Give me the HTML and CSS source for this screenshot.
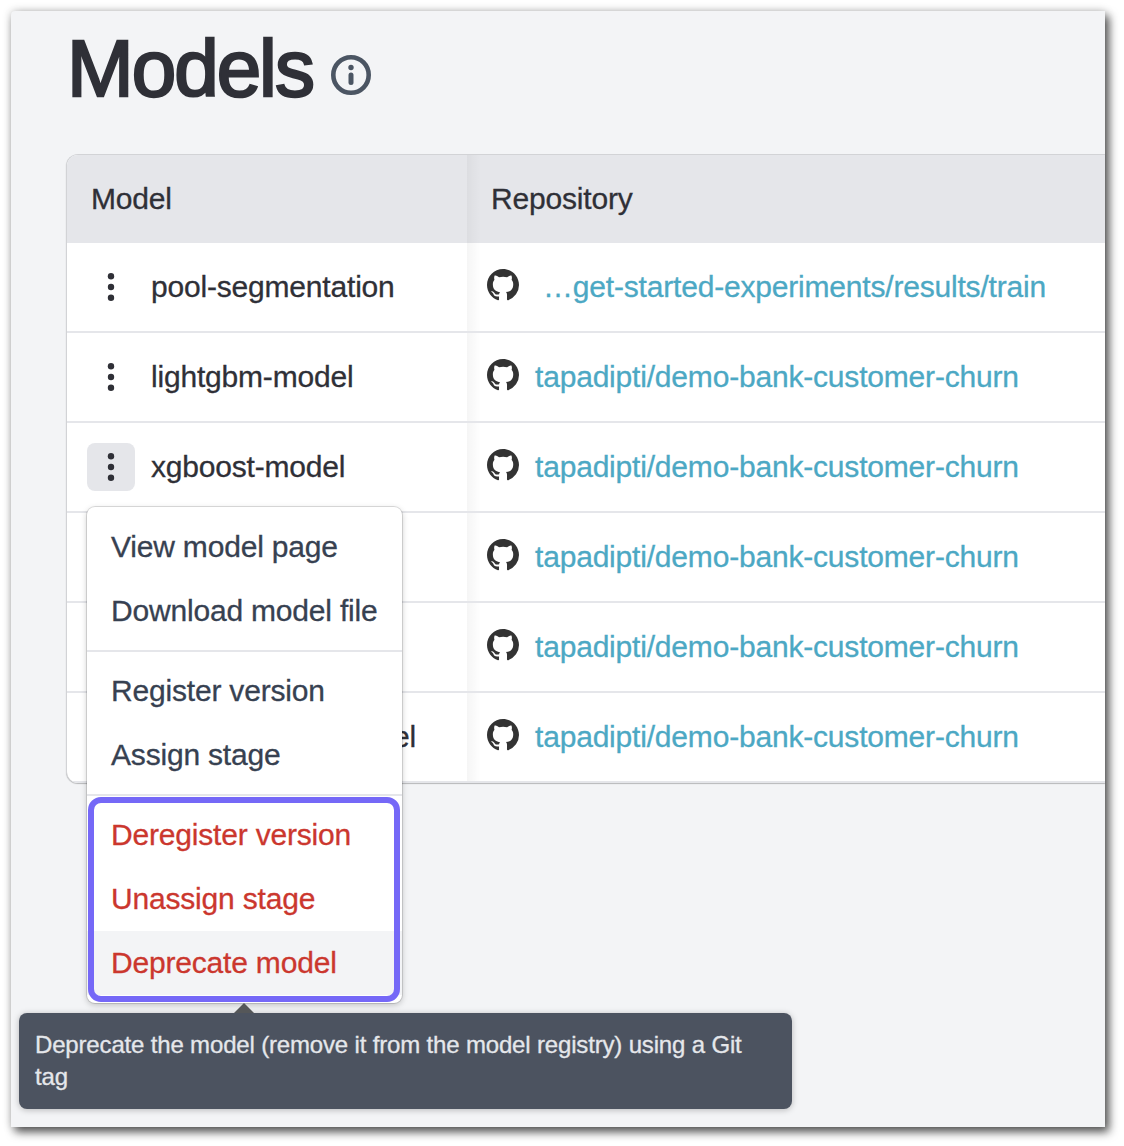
FILE: index.html
```html
<!DOCTYPE html>
<html lang="en">
<head>
<meta charset="utf-8">
<title>Models</title>
<link rel="stylesheet" href="styles.css">
</head>
<body>
<svg width="0" height="0" class="defs" aria-hidden="true">
  <symbol id="github" viewBox="0 0 16 16"><path d="M8 0C3.58 0 0 3.58 0 8c0 3.54 2.29 6.53 5.47 7.59.4.07.55-.17.55-.38 0-.19-.01-.82-.01-1.49-2.01.37-2.53-.49-2.69-.94-.09-.23-.48-.94-.82-1.13-.28-.15-.68-.52-.01-.53.63-.01 1.08.58 1.23.82.72 1.21 1.87.87 2.33.66.07-.52.28-.87.51-1.07-1.78-.2-3.64-.89-3.64-3.95 0-.87.31-1.59.82-2.15-.08-.2-.36-1.02.08-2.12 0 0 .67-.21 2.2.82.64-.18 1.32-.27 2-.27s1.36.09 2 .27c1.53-1.04 2.2-.82 2.2-.82.44 1.1.16 1.92.08 2.12.51.56.82 1.27.82 2.15 0 3.07-1.87 3.75-3.65 3.95.29.25.54.73.54 1.48 0 1.07-.01 1.93-.01 2.2 0 .21.15.46.55.38A8.01 8.01 0 0 0 16 8c0-4.42-3.58-8-8-8z"/></symbol>
  <symbol id="kebab" viewBox="0 0 48 48"><circle cx="24" cy="13.2" r="3.2"/><circle cx="24" cy="24" r="3.2"/><circle cx="24" cy="34.8" r="3.2"/></symbol>
</svg>
<main class="panel">
  <header class="heading">
    <h1 class="title">Models</h1>
    <svg class="info" viewBox="0 0 40 40"><circle cx="20" cy="20" r="17.7" fill="none" stroke="currentColor" stroke-width="4.6"/><circle cx="20" cy="12.5" r="2.7" fill="currentColor"/><rect x="17.5" y="17.6" width="5" height="12.4" rx="2.5" fill="currentColor"/></svg>
  </header>
  <section class="table">
    <div class="row head"><div class="cell model">Model</div><div class="cell repo">Repository</div></div>
    <div class="row"><div class="cell model"><svg class="kebab"><use href="#kebab"/></svg><span>pool-segmentation</span></div><div class="cell repo"><svg class="github"><use href="#github"/></svg><a class="link short">…get-started-experiments/results/train</a></div></div>
    <div class="row"><div class="cell model"><svg class="kebab"><use href="#kebab"/></svg><span>lightgbm-model</span></div><div class="cell repo"><svg class="github"><use href="#github"/></svg><a class="link">tapadipti/demo-bank-customer-churn</a></div></div>
    <div class="row"><div class="cell model"><svg class="kebab active"><use href="#kebab"/></svg><span>xgboost-model</span></div><div class="cell repo"><svg class="github"><use href="#github"/></svg><a class="link">tapadipti/demo-bank-customer-churn</a></div></div>
    <div class="row"><div class="cell model"></div><div class="cell repo"><svg class="github"><use href="#github"/></svg><a class="link">tapadipti/demo-bank-customer-churn</a></div></div>
    <div class="row"><div class="cell model"></div><div class="cell repo"><svg class="github"><use href="#github"/></svg><a class="link">tapadipti/demo-bank-customer-churn</a></div></div>
    <div class="row"><div class="cell model tail"><span>el</span></div><div class="cell repo"><svg class="github"><use href="#github"/></svg><a class="link">tapadipti/demo-bank-customer-churn</a></div></div>
  </section>
  <nav class="menu">
    <div class="item">View model page</div>
    <div class="item">Download model file</div>
    <div class="separator"></div>
    <div class="item">Register version</div>
    <div class="item">Assign stage</div>
    <div class="separator"></div>
    <div class="item danger">Deregister version</div>
    <div class="item danger">Unassign stage</div>
    <div class="item danger hover">Deprecate model</div>
    <div class="highlight"></div>
  </nav>
  <div class="tooltip">Deprecate the model (remove it from the model registry) using a Git tag</div>
</main>
</body>
</html>
```
FILE: styles.css
```css
* { box-sizing: border-box; }
body {
  margin: 0;
  padding: 11px 19px 19px 11px;
  background: #fff;
  font-family: "Liberation Sans", Arial, sans-serif;
  font-size: 30px;
  line-height: 40px;
  letter-spacing: -.19px;
  -webkit-text-stroke: .3px currentColor;
  color: #2f3037;
}
.defs { position: absolute; }
.panel {
  position: relative;
  height: 1116px;
  padding: 16px 0 0 55px;
  background: #f3f4f6;
  border-radius: 4px 0 0 0;
  box-shadow: 4px 5px 10px rgba(0, 0, 0, .65), 0 0 10px rgba(0, 0, 0, .2);
}
.heading { display: flex; height: 127px; }
.title {
  margin: 0;
  width: 265px;
  padding: 2px 0 0 1px;
  font-size: 80px;
  font-weight: 400;
  line-height: 80px;
  letter-spacing: -2px;
  -webkit-text-stroke: 2.4px #2f3037;
}
.info { width: 40px; height: 40px; margin-top: 28px; color: #4b5563; }
.table {
  border: 1px solid #d2d3d6;
  border-right: 0;
  border-bottom: 0;
  border-radius: 12px 0 0 12px;
  overflow: hidden;
  box-shadow: 0 1px 1px rgba(0, 0, 0, .25);
  background: #fff;
}
.row { display: flex; height: 90px; }
.head { height: 88px; background: #e5e6ea; }
.cell { display: flex; align-items: center; border-bottom: 2px solid #e5e6ea; white-space: nowrap; }
.head .cell { border: 0; padding-left: 24px; }
.model { width: 400px; padding-left: 20px; gap: 16px; }
.repo {
  flex: 1;
  padding-left: 20px;
  gap: 16px;
  background: linear-gradient(90deg, rgba(0, 0, 0, .04), transparent 14px);
}
.cell.tail { padding-left: 326px; }
.kebab { width: 48px; height: 48px; border-radius: 8px; fill: #2f3037; }
.active { background: #e5e6ea; }
.github { width: 32px; height: 32px; margin-bottom: 4px; fill: #333; }
.link { color: #4ca8c4; }
.short { margin-left: 8px; }
.menu {
  position: absolute;
  left: 76px;
  top: 496px;
  width: 315px;
  height: 496px;
  padding: 8px 0;
  border-radius: 8px;
  background: #fff;
  color: #374151;
  box-shadow: 0 0 0 1px rgba(0, 0, 0, .12), 0 2px 6px rgba(0, 0, 0, .22);
}
.item { height: 64px; padding-left: 24px; line-height: 64px; white-space: nowrap; }
.separator { height: 2px; margin: 7px 0; background: #e5e6ea; }
.danger { color: #cb372e; }
.hover { background: #f3f4f6; }
.highlight {
  position: absolute;
  left: 1px;
  top: 290px;
  width: 312px;
  height: 205px;
  border: 6px solid #7568f7;
  border-radius: 13px;
}
.tooltip {
  position: absolute;
  left: 8px;
  top: 1002px;
  width: 773px;
  height: 96px;
  padding: 16px;
  border-radius: 8px;
  background: #4c5360;
  color: #e5e7eb;
  font-size: 24px;
  line-height: 32px;
  letter-spacing: -.165px;
  box-shadow: 0 1px 6px rgba(0, 0, 0, .25);
}
.tooltip::before {
  content: "";
  position: absolute;
  left: 215px;
  top: -10px;
  border: 10px solid transparent;
  border-top: 0;
  border-bottom-color: #555759;
}
```
